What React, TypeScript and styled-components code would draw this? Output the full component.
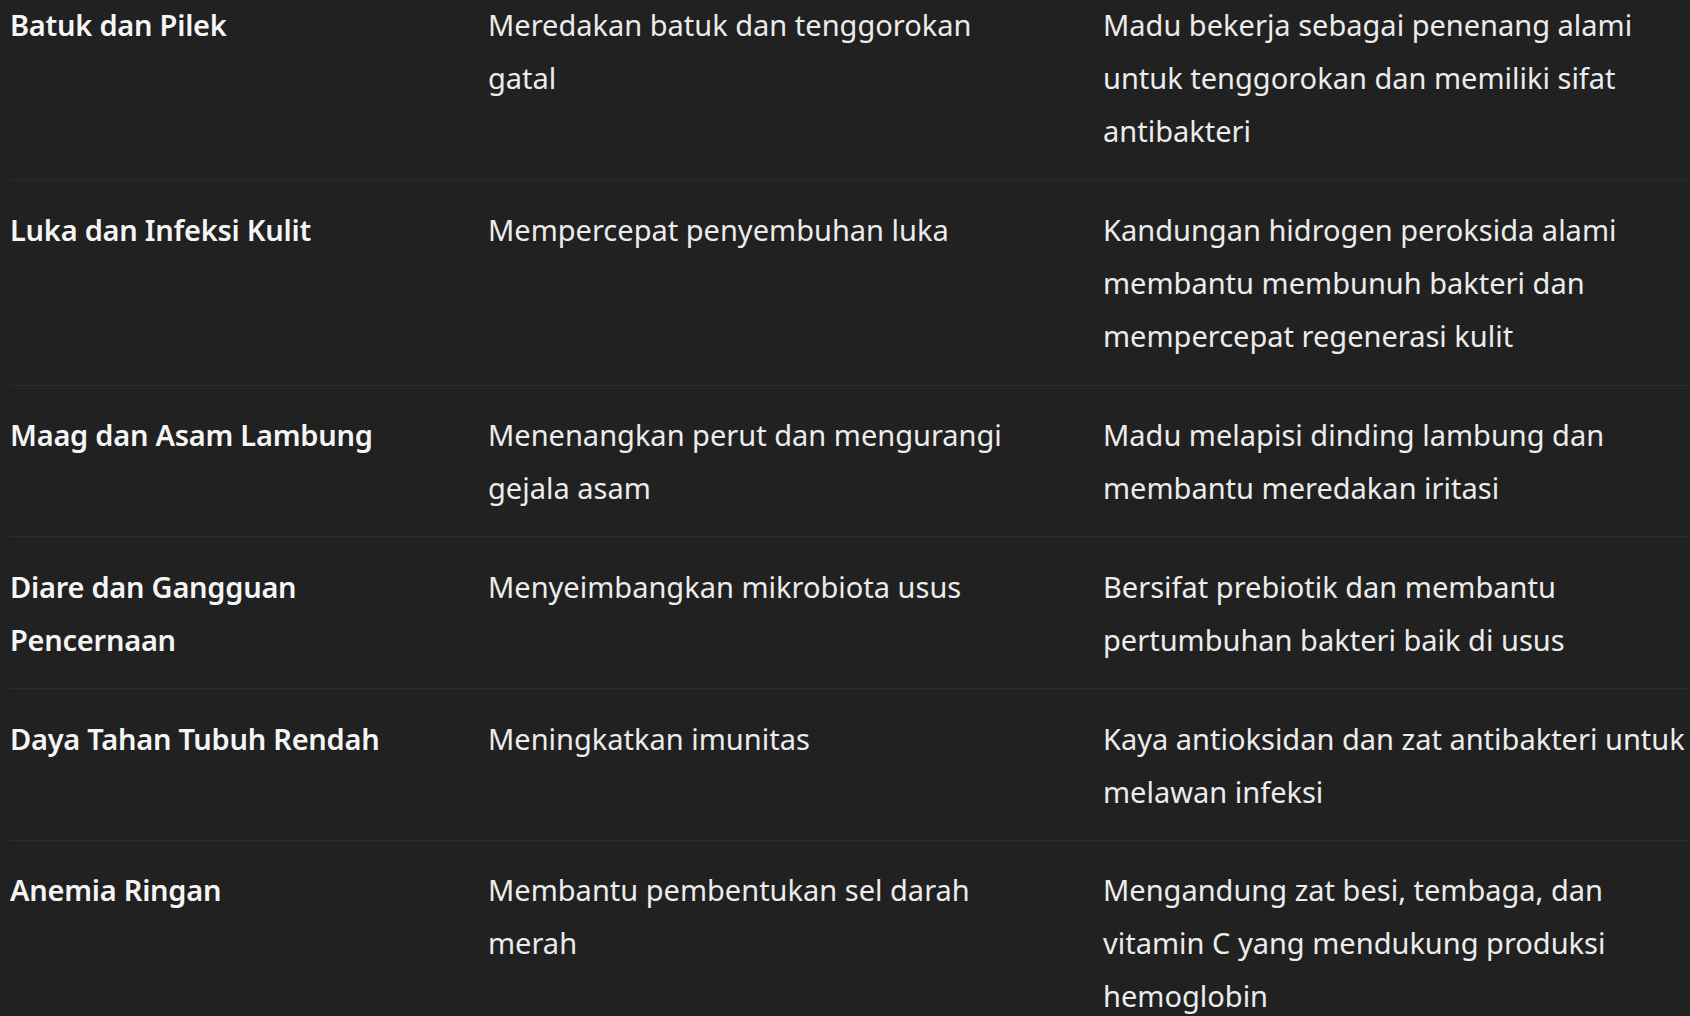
import React from "react";
import styled, { createGlobalStyle } from "styled-components";

const GlobalStyle = createGlobalStyle`
  html, body {
    margin: 0;
    padding: 0;
    background: #212121;
    overflow: hidden;
  }
  body {
    font-family: "Noto Sans", "Open Sans", sans-serif;
    color: #ececec;
  }
`;

const Page = styled.div`
  width: 1690px;
  height: 1016px;
  overflow: hidden;
  background: #212121;
`;

const Table = styled.div`
  margin-top: -24px;
  padding-left: 10px;
  width: 1693px;
  display: flex;
  flex-direction: column;
`;

const Row = styled.div`
  display: grid;
  grid-template-columns: 478px 615px 600px;
  padding: 22.4px 0;
  border-bottom: 1px solid #2c2c2c;
`;

const Cell = styled.div<{ $bold?: boolean; $pad?: number }>`
  font-size: 29px;
  line-height: 53px;
  font-weight: ${(p) => (p.$bold ? 600 : 400)};
  letter-spacing: ${(p) => (p.$bold ? "-0.25px" : "0")};
  color: ${(p) => (p.$bold ? "#f5f5f5" : "#ececec")};
  padding-right: ${(p) => p.$pad ?? 0}px;
`;

const rows: [string, string, string][] = [
  [
    "Batuk dan Pilek",
    "Meredakan batuk dan tenggorokan gatal",
    "Madu bekerja sebagai penenang alami untuk tenggorokan dan memiliki sifat antibakteri",
  ],
  [
    "Luka dan Infeksi Kulit",
    "Mempercepat penyembuhan luka",
    "Kandungan hidrogen peroksida alami membantu membunuh bakteri dan mempercepat regenerasi kulit",
  ],
  [
    "Maag dan Asam Lambung",
    "Menenangkan perut dan mengurangi gejala asam",
    "Madu melapisi dinding lambung dan membantu meredakan iritasi",
  ],
  [
    "Diare dan Gangguan Pencernaan",
    "Menyeimbangkan mikrobiota usus",
    "Bersifat prebiotik dan membantu pertumbuhan bakteri baik di usus",
  ],
  [
    "Daya Tahan Tubuh Rendah",
    "Meningkatkan imunitas",
    "Kaya antioksidan dan zat antibakteri untuk melawan infeksi",
  ],
  [
    "Anemia Ringan",
    "Membantu pembentukan sel darah merah",
    "Mengandung zat besi, tembaga, dan vitamin C yang mendukung produksi hemoglobin",
  ],
];

export default function App() {
  return (
    <Page>
      <GlobalStyle />
      <Table>
        {rows.map(([a, b, c]) => (
          <Row key={a}>
            <Cell $bold $pad={40}>
              {a}
            </Cell>
            <Cell $pad={80}>{b}</Cell>
            <Cell $pad={0}>{c}</Cell>
          </Row>
        ))}
      </Table>
    </Page>
  );
}
